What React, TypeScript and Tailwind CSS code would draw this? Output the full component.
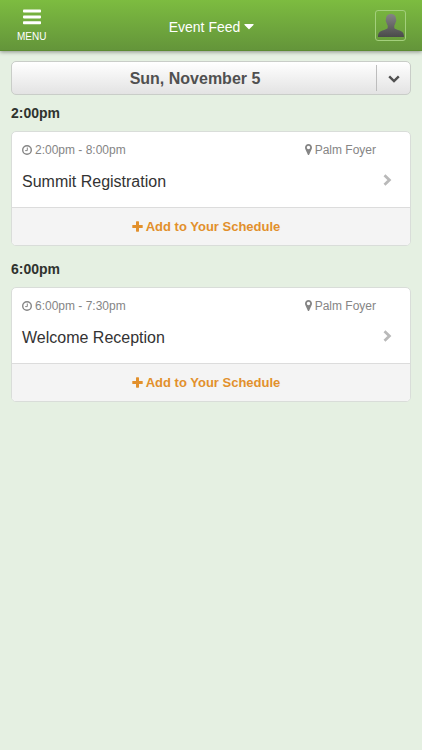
import { useState } from "react";
import { FaCaretDown } from "react-icons/fa";

const events = [
  {
    id: "registration",
    start: "2:00pm",
    time: "2:00pm - 8:00pm",
    location: "Palm Foyer",
    title: "Summit Registration",
  },
  {
    id: "reception",
    start: "6:00pm",
    time: "6:00pm - 7:30pm",
    location: "Palm Foyer",
    title: "Welcome Reception",
  },
];

const days = ["Sun, November 5"];

const MenuIcon = () => (
  <svg viewBox="0 0 18 16" className="w-[18px] h-4" fill="currentColor" aria-hidden="true">
    <rect x="0" y="0.5" width="18" height="3" rx="0.8" />
    <rect x="0" y="6.4" width="18" height="3" rx="0.8" />
    <rect x="0" y="12.3" width="18" height="3" rx="0.8" />
  </svg>
);

const ClockIcon = () => (
  <svg viewBox="0 0 20 20" className="w-[10px] h-[10px]" fill="none" stroke="currentColor" aria-hidden="true">
    <circle cx="10" cy="10" r="8.6" strokeWidth="2.8" />
    <path d="M10.6 5V11.2H6.4" strokeWidth="2" />
  </svg>
);

const MarkerIcon = () => (
  <svg viewBox="0 0 14 22" className="w-[7px] h-[11px]" fill="currentColor" aria-hidden="true">
    <path
      fillRule="evenodd"
      d="M7 0C3.1 0 0 3.1 0 7C0 8.1 0.2 9 0.6 9.9L5.5 20.8C6.1 22.2 7.9 22.2 8.5 20.8L13.4 9.9C13.8 9 14 8.1 14 7C14 3.1 10.9 0 7 0ZM7 3.6A3.4 3.4 0 1 1 7 10.4A3.4 3.4 0 1 1 7 3.6Z"
    />
  </svg>
);

const PlusIcon = () => (
  <svg viewBox="0 0 11 11" className="w-[11px] h-[11px]" fill="currentColor" aria-hidden="true">
    <rect x="4" y="0.3" width="3" height="10.4" rx="0.6" />
    <rect x="0.3" y="4" width="10.4" height="3" rx="0.6" />
  </svg>
);

const ChevronRightIcon = () => (
  <svg
    viewBox="0 0 9 12"
    className="shrink-0 w-[9px] h-3 text-[#b9b9b9]"
    fill="none"
    stroke="currentColor"
    strokeWidth="2.8"
    aria-hidden="true"
  >
    <path d="M1.5 1.2L6.4 6L1.5 10.8" />
  </svg>
);

const ChevronDownIcon = () => (
  <svg viewBox="0 0 12 8" className="w-3 h-2" fill="none" stroke="currentColor" strokeWidth="2.4" aria-hidden="true">
    <path d="M1.2 1.3L6 6L10.8 1.3" />
  </svg>
);

const Avatar = () => (
  <svg viewBox="0 0 28 28" className="w-7 h-7" aria-hidden="true">
    <defs>
      <linearGradient id="silhouette" x1="0" y1="0" x2="0" y2="1">
        <stop offset="0" stopColor="#858585" />
        <stop offset="1" stopColor="#4a4a4a" />
      </linearGradient>
    </defs>
    <path
      fill="url(#silhouette)"
      d="M14 3C17.4 3 19.1 5.2 19 8.3C19.5 8.8 19.4 10.6 18.6 11.4C18.3 12.8 17.8 13.9 17.3 14.6V17C17.8 18 20.3 18.7 22.6 19.5C25.8 20.6 27 22 27 26H1C1 22 2.2 20.6 5.4 19.5C7.7 18.7 10.2 18 10.7 17V14.6C10.2 13.9 9.7 12.8 9.4 11.4C8.6 10.6 8.5 8.8 9 8.3C8.9 5.2 10.6 3 14 3Z"
    />
  </svg>
);

const EventCard = ({ event }: { event: (typeof events)[number] }) => {
  const [added, setAdded] = useState(false);

  return (
    <article className="rounded-[5px] border border-[#d9ddd9] bg-white overflow-hidden">
      <a href={`#${event.id}`} className="flex items-center h-[75px] pb-1 pl-[10px] pr-[18px] gap-[7px]">
        <div className="flex-1 min-w-0">
          <div className="flex justify-between text-xs leading-4 text-[#858585]">
            <span className="flex items-center gap-[3px]">
              <ClockIcon />
              {event.time}
            </span>
            <span className="flex items-center gap-[3px]">
              <MarkerIcon />
              {event.location}
            </span>
          </div>
          <h3 className="mt-3 text-base leading-6 text-[#333]">{event.title}</h3>
        </div>
        <span className="pt-6">
          <ChevronRightIcon />
        </span>
      </a>
      <button
        aria-pressed={added}
        onClick={() => setAdded(!added)}
        className="flex items-center justify-center gap-[3px] w-full h-[38px] pr-[10px] border-t border-[#dcdcdc] bg-[#f4f4f4] text-[13px] font-bold text-[#e2902c]"
      >
        <PlusIcon />
        Add to Your Schedule
      </button>
    </article>
  );
};

const App = () => {
  const [day, setDay] = useState(days[0]);

  return (
    <div className="min-h-screen bg-[#e5f0e2] font-['Liberation_Sans',Arial,sans-serif]">
      <header className="flex items-center justify-between h-[51px] pl-[17px] pr-4 bg-linear-to-b from-[#7dbc40] to-[#64953a] border-b border-[#5c8b32] text-white shadow-[0_1px_4px_rgba(0,0,0,0.4)]">
        <div className="flex flex-1">
          <button className="flex flex-col items-center gap-1 pt-1">
            <MenuIcon />
            <span className="text-[10px] leading-4">MENU</span>
          </button>
        </div>
        <button className="flex items-center gap-1 pt-[3px] text-sm">
          Event Feed
          <FaCaretDown className="w-[10px] h-4 mb-[2px]" />
        </button>
        <div className="flex flex-1 justify-end">
          <button
            aria-label="Profile"
            className="flex items-center justify-center w-[31px] h-[31px] rounded-[3px] border border-[#a3cf7c] overflow-hidden"
          >
            <Avatar />
          </button>
        </div>
      </header>

      <main className="px-[11px] pt-[10px]">
        <div className="relative">
          <select
            aria-label="Day"
            value={day}
            onChange={(e) => setDay(e.target.value)}
            className="block w-full h-[34px] pt-[2px] pr-8 appearance-none rounded-[5px] border border-[#c9cdc8] bg-linear-to-b from-white to-[#e3e3e3] text-base font-bold text-[#505050] [text-align-last:center]"
          >
            {days.map((d) => (
              <option key={d}>{d}</option>
            ))}
          </select>
          <span className="absolute right-0 inset-y-1 flex items-center justify-center w-[35px] pt-[2px] border-l border-[#bdbdbd] text-[#505050] pointer-events-none">
            <ChevronDownIcon />
          </span>
        </div>

        {events.map((event) => (
          <section key={event.id} className="mb-[5px]">
            <h2 className="py-2 text-sm leading-5 font-bold text-[#2f332e]">{event.start}</h2>
            <EventCard event={event} />
          </section>
        ))}
      </main>
    </div>
  );
};

export default App;
